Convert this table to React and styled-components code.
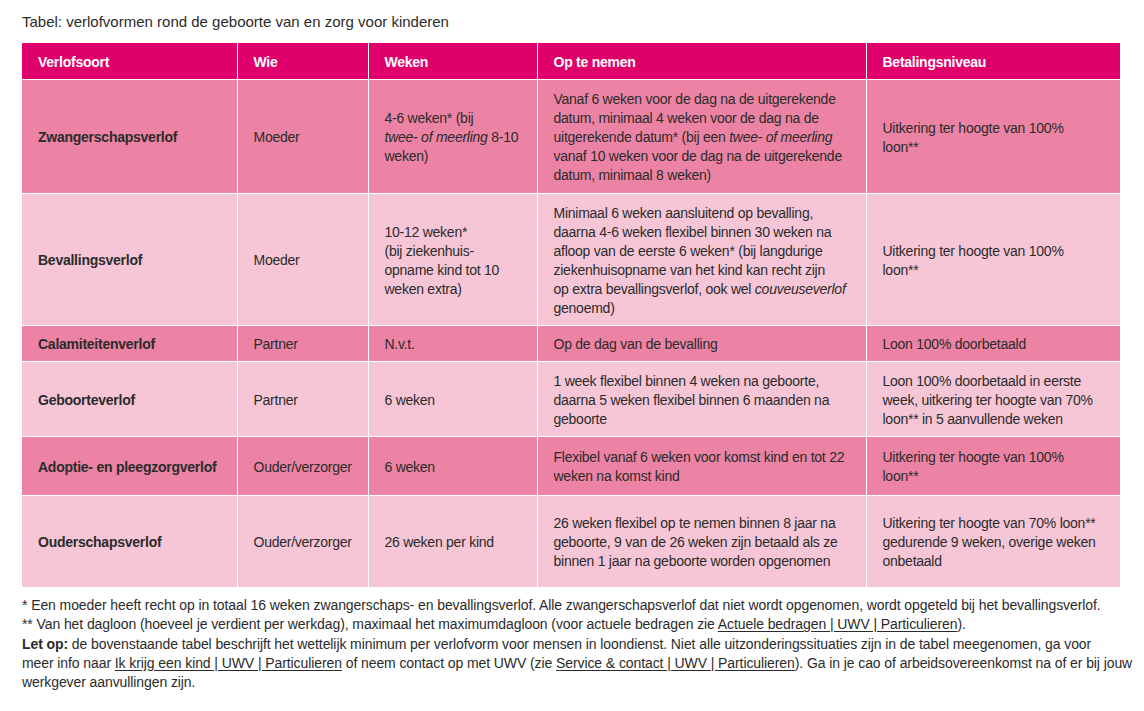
import React from 'react';
import styled, { createGlobalStyle } from 'styled-components';

const GlobalStyle = createGlobalStyle`
  html, body {
    margin: 0;
    padding: 0;
    background: #ffffff;
  }

  body {
    font-family: 'Liberation Sans', Arial, sans-serif;
    color: #2b2b2b;
  }
`;

const COLUMNS = [
  { label: 'Verlofsoort', width: 215 },
  { label: 'Wie', width: 131 },
  { label: 'Weken', width: 169 },
  { label: 'Op te nemen', width: 329 },
  { label: 'Betalingsniveau', width: 254 },
];

const ROWS = [
  {
    tone: 'dark',
    height: 114,
    kind: 'Zwangerschapsverlof',
    who: 'Moeder',
    weeks: (
      <>
        4-6 weken* (bij
        <br />
        <i>twee- of meerling</i> 8-10
        <br />
        weken)
      </>
    ),
    take: (
      <>
        Vanaf 6 weken voor de dag na de uitgerekende
        <br />
        datum, minimaal 4 weken voor de dag na de
        <br />
        uitgerekende datum* (bij een <i>twee- of meerling</i>
        <br />
        vanaf 10 weken voor de dag na de uitgerekende
        <br />
        datum, minimaal 8 weken)
      </>
    ),
    pay: (
      <>
        Uitkering ter hoogte van 100%
        <br />
        loon**
      </>
    ),
  },
  {
    tone: 'light',
    height: 132,
    kind: 'Bevallingsverlof',
    who: 'Moeder',
    weeks: (
      <>
        10-12 weken*
        <br />
        (bij ziekenhuis-
        <br />
        opname kind tot 10
        <br />
        weken extra)
      </>
    ),
    take: (
      <>
        Minimaal 6 weken aansluitend op bevalling,
        <br />
        daarna 4-6 weken flexibel binnen 30 weken na
        <br />
        afloop van de eerste 6 weken* (bij langdurige
        <br />
        ziekenhuisopname van het kind kan recht zijn
        <br />
        op extra bevallingsverlof, ook wel <i>couveuseverlof</i>
        <br />
        genoemd)
      </>
    ),
    pay: (
      <>
        Uitkering ter hoogte van 100%
        <br />
        loon**
      </>
    ),
  },
  {
    tone: 'dark',
    height: 36,
    kind: 'Calamiteitenverlof',
    who: 'Partner',
    weeks: 'N.v.t.',
    take: 'Op de dag van de bevalling',
    pay: 'Loon 100% doorbetaald',
  },
  {
    tone: 'light',
    height: 75,
    kind: 'Geboorteverlof',
    who: 'Partner',
    weeks: '6 weken',
    take: (
      <>
        1 week flexibel binnen 4 weken na geboorte,
        <br />
        daarna 5 weken flexibel binnen 6 maanden na
        <br />
        geboorte
      </>
    ),
    pay: (
      <>
        Loon 100% doorbetaald in eerste
        <br />
        week, uitkering ter hoogte van 70%
        <br />
        loon** in 5 aanvullende weken
      </>
    ),
  },
  {
    tone: 'dark',
    height: 59,
    kind: 'Adoptie- en pleegzorgverlof',
    who: 'Ouder/verzorger',
    weeks: '6 weken',
    take: (
      <>
        Flexibel vanaf 6 weken voor komst kind en tot 22
        <br />
        weken na komst kind
      </>
    ),
    pay: (
      <>
        Uitkering ter hoogte van 100%
        <br />
        loon**
      </>
    ),
  },
  {
    tone: 'light',
    height: 92,
    kind: 'Ouderschapsverlof',
    who: 'Ouder/verzorger',
    weeks: '26 weken per kind',
    take: (
      <>
        26 weken flexibel op te nemen binnen 8 jaar na
        <br />
        geboorte, 9 van de 26 weken zijn betaald als ze
        <br />
        binnen 1 jaar na geboorte worden opgenomen
      </>
    ),
    pay: (
      <>
        Uitkering ter hoogte van 70% loon**
        <br />
        gedurende 9 weken, overige weken
        <br />
        onbetaald
      </>
    ),
  },
];

export default function App() {
  return (
    <>
      <GlobalStyle />
      <Page>
        <Caption>Tabel: verlofvormen rond de geboorte van en zorg voor kinderen</Caption>

        <Table>
          <colgroup>
            {COLUMNS.map((col) => (
              <Column key={col.label} $width={col.width} />
            ))}
          </colgroup>
          <thead>
            <HeadRow>
              {COLUMNS.map((col) => (
                <HeadCell key={col.label}>{col.label}</HeadCell>
              ))}
            </HeadRow>
          </thead>
          <tbody>
            {ROWS.map((row) => (
              <Row key={row.kind} $tone={row.tone} $height={row.height}>
                <Cell $strong>{row.kind}</Cell>
                <Cell>{row.who}</Cell>
                <Cell>{row.weeks}</Cell>
                <Cell>{row.take}</Cell>
                <Cell>{row.pay}</Cell>
              </Row>
            ))}
          </tbody>
        </Table>

        <Notes>
          <NoteLine>
            * Een moeder heeft recht op in totaal 16 weken zwangerschaps- en bevallingsverlof. Alle zwangerschapsverlof dat niet wordt opgenomen, wordt opgeteld bij het bevallingsverlof.
          </NoteLine>
          <NoteLine>
            ** Van het dagloon (hoeveel je verdient per werkdag), maximaal het maximumdagloon (voor actuele bedragen zie{' '}
            <NoteLink href="#">Actuele bedragen | UWV | Particulieren</NoteLink>).
          </NoteLine>
          <NoteLine>
            <b>Let op:</b> de bovenstaande tabel beschrijft het wettelijk minimum per verlofvorm voor mensen in loondienst. Niet alle uitzonderingssituaties zijn in de tabel meegenomen, ga voor
            <br />
            meer info naar <NoteLink href="#">Ik krijg een kind | UWV | Particulieren</NoteLink> of neem contact op met UWV (zie{' '}
            <NoteLink href="#">Service &amp; contact | UWV | Particulieren</NoteLink>). Ga in je cao of arbeidsovereenkomst na of er bij jouw
            <br />
            werkgever aanvullingen zijn.
          </NoteLine>
        </Notes>
      </Page>
    </>
  );
}

const Page = styled.main`
  display: flex;
  flex-direction: column;

  padding: 12px 24px 0 22px;

  font-size: 14px;
  letter-spacing: -0.25px;
`;

const Caption = styled.h1`
  margin: 0 0 11px;

  font-size: 15px;
  font-weight: 400;
  line-height: 20px;
  letter-spacing: 0;
  color: #2b2b2b;
`;

const Table = styled.table`
  width: 1098px;
  table-layout: fixed;
  border-collapse: collapse;
`;

const Column = styled.col`
  width: ${(props) => props.$width}px;
`;

const HeadRow = styled.tr`
  height: 36px;
  background-color: #df006b;
`;

const HeadCell = styled.th`
  padding: 3px 16px 0;
  border: 1px solid #ffffff;
  border-top: none;

  font-weight: 700;
  line-height: 19px;
  text-align: left;
  color: #ffffff;

  &:first-child {
    border-left: none;
  }

  &:last-child {
    border-right: none;
  }
`;

const Row = styled.tr`
  height: ${(props) => props.$height}px;
  background-color: ${(props) => (props.$tone === 'dark' ? '#ec83a4' : '#f6c6d6')};
`;

const Cell = styled.td`
  padding: 3px 16px 0;
  border: 1px solid #ffffff;

  vertical-align: middle;
  white-space: nowrap;

  font-weight: ${(props) => (props.$strong ? 700 : 400)};
  line-height: 19px;
  color: #2b2b2b;

  &:first-child {
    border-left: none;
  }

  &:last-child {
    border-right: none;
  }

  tr:last-child > & {
    border-bottom: none;
  }
`;

const Notes = styled.div`
  display: flex;
  flex-direction: column;

  margin-top: 9px;

  line-height: 19.3px;
  letter-spacing: -0.09px;
  color: #2b2b2b;
`;

const NoteLine = styled.p`
  margin: 0;
  white-space: nowrap;

  b {
    font-weight: 700;
  }
`;

const NoteLink = styled.a`
  color: inherit;
  text-decoration: underline;
  text-underline-offset: 2px;
`;
